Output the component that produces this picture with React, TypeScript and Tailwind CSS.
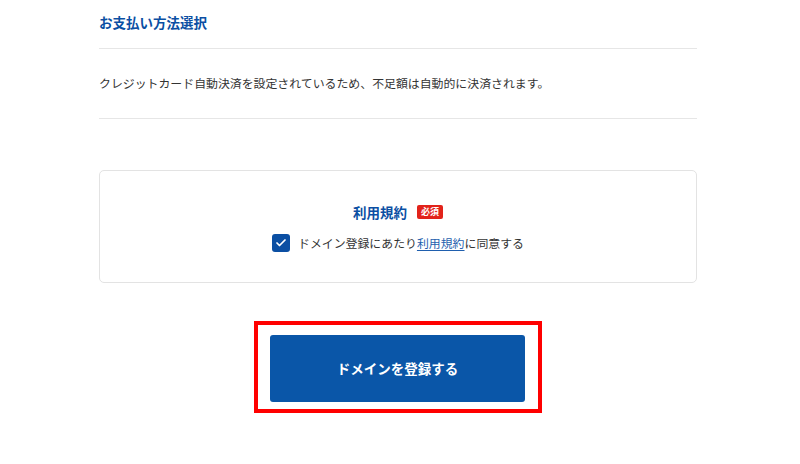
import { Check } from "lucide-react";

const jp = "font-['Noto_Sans_CJK_JP','Noto_Sans',sans-serif]";

export default function App() {
  return (
    <main className={`min-h-[464px] w-full bg-white text-[#333] ${jp}`}>
      <div className="ml-[99px] w-[598px]">
        {/* payment method */}
        <section className="border-b border-[#e6e6e6] pt-3 pb-4">
          <h2 className="text-[13.5px] font-bold leading-5 text-[#0b4fa3]">
            お支払い方法選択
          </h2>
        </section>
        <section className="border-b border-[#e6e6e6] pt-6 pb-[25px]">
          <p className="text-[11.9px] leading-5 text-[#333]">
            クレジットカード自動決済を設定されているため、不足額は自動的に決済されます。
          </p>
        </section>

        {/* terms */}
        <section className="mt-[51px] flex h-[113px] flex-col items-center justify-center gap-3 rounded-[5px] border border-[#e3e3e3]">
          <div className="flex items-center gap-[10px]">
            <span className="text-[13.5px] font-bold leading-5 text-[#0b4fa3]">
              利用規約
            </span>
            <span className="flex h-[14px] w-[26px] items-center justify-center rounded-[2px] bg-[#e2231a] text-[9px] font-bold leading-none text-white">
              必須
            </span>
          </div>
          <label className="flex items-center gap-2">
            <span className="flex h-[18px] w-[18px] items-center justify-center rounded-[3px] bg-[#0b4fa3]">
              <Check className="h-3 w-3 text-white" strokeWidth={3.5} />
            </span>
            <span className="text-[11.9px] leading-[18px] text-[#333]">
              ドメイン登録にあたり
              <a className="text-[#1f5fae] underline underline-offset-2">利用規約</a>
              に同意する
            </span>
          </label>
        </section>

        {/* submit */}
        <div className="mt-[38px] flex justify-center">
          <div className="border-4 border-[#ff0000] pt-[10px] pr-[13px] pb-[7px] pl-3">
            <button className="flex h-[67px] w-[255px] items-center justify-center rounded-[3px] bg-[#0a56a8] text-[13.5px] font-bold text-white">
              ドメインを登録する
            </button>
          </div>
        </div>
      </div>
    </main>
  );
}
